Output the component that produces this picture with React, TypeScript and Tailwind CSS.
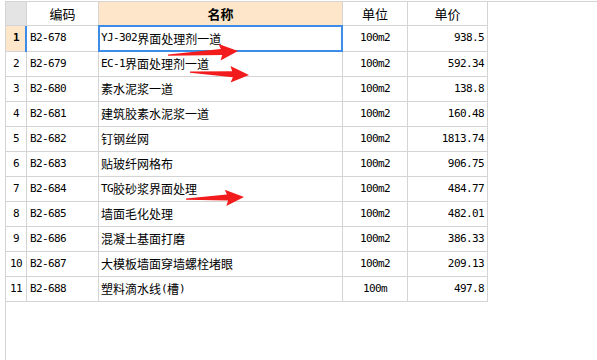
import React from "react"

const rows = [
  ["B2-678", "YJ-302界面处理剂一道", "100m2", "938.5"],
  ["B2-679", "EC-1界面处理剂一道", "100m2", "592.34"],
  ["B2-680", "素水泥浆一道", "100m2", "138.8"],
  ["B2-681", "建筑胶素水泥浆一道", "100m2", "160.48"],
  ["B2-682", "钉钢丝网", "100m2", "1813.74"],
  ["B2-683", "贴玻纤网格布", "100m2", "906.75"],
  ["B2-684", "TG胶砂浆界面处理", "100m2", "484.77"],
  ["B2-685", "墙面毛化处理", "100m2", "482.01"],
  ["B2-686", "混凝土基面打磨", "100m2", "386.33"],
  ["B2-687", "大模板墙面穿墙螺栓堵眼", "100m2", "209.13"],
  ["B2-688", "塑料滴水线(槽)", "100m", "497.8"],
]

const mono = "font-['DejaVu_Sans_Mono',monospace] text-[11px] tracking-[-0.6px]"
const cjk = "font-['Noto_Sans_CJK_SC','Noto_Sans',sans-serif] text-[12px]"

// ascii runs go half width, the rest full width, like the old SimSun grid
function Mixed({ text }: { text: string }) {
  const parts = text.match(/[\x00-\x7f]+|[^\x00-\x7f]+/g) ?? []
  return (
    <>
      {parts.map((p, i) => (
        <span key={i} className={/^[\x00-\x7f]/.test(p) ? mono : cjk}>
          {p}
        </span>
      ))}
    </>
  )
}

// red hand-drawn arrow, tail -> tip
function Arrow({ x1, y1, x2, y2 }: { x1: number; y1: number; x2: number; y2: number }) {
  const L = Math.hypot(x2 - x1, y2 - y1)
  const a = (Math.atan2(y2 - y1, x2 - x1) * 180) / Math.PI
  const pts = [
    [0, -0.6],
    [L - 17, -3],
    [L - 19, -8],
    [L, 0],
    [L - 18, 8.5],
    [L - 16, 3],
    [0, 0.8],
  ]
    .map(p => p.join(","))
    .join(" ")
  return <polygon points={pts} fill="#f21c1c" transform={`translate(${x1} ${y1}) rotate(${a})`} />
}

export default function App() {
  return (
    <div className="relative w-[597px] h-[360px] bg-white pt-px overflow-hidden">
      <div className="ml-[5px] h-[359px] border-l border-t border-[#d4d4d4]">
        <div className="flex h-6 border-b border-[#d4d4d4] w-[482px]">
          <div className="w-[21px] shrink-0 border-r border-[#d4d4d4] bg-[#e4e4e4]" />
          <div className={`w-[72px] shrink-0 border-r border-[#d4d4d4] flex items-center justify-center ${cjk} text-[13px] text-black`}>编码</div>
          <div className={`w-[244px] shrink-0 border-r border-[#d4d4d4] bg-[#fde6c9] flex items-center justify-center ${cjk} text-[13px] font-bold text-black`}>名称</div>
          <div className={`w-[65px] shrink-0 border-r border-[#d4d4d4] flex items-center justify-center ${cjk} text-[13px] text-black`}>单位</div>
          <div className={`w-[80px] shrink-0 border-r border-[#d4d4d4] flex items-center justify-center ${cjk} text-[13px] text-black`}>单价</div>
        </div>
        {rows.map(([code, name, unit, price], i) => {
          const sel = i === 0
          return (
            <div key={code} className={`flex w-[482px] border-b border-[#d4d4d4] text-black ${sel ? "h-[26px]" : "h-[25px]"}`}>
              <div
                className={`relative w-[21px] shrink-0 border-r border-[#d4d4d4] flex items-center justify-center ${mono} ${sel ? "bg-[#fde6c9] font-bold" : ""}`}
              >
                {i + 1}
                {sel && <div className="absolute right-[-1px] top-0 bottom-[-1px] w-[2px] bg-[#3d8ce8]" />}
              </div>
              <div className={`w-[72px] shrink-0 border-r border-[#d4d4d4] flex items-center pl-[3px] ${mono}`}>{code}</div>
              <div className="relative w-[244px] shrink-0 border-r border-[#d4d4d4] flex items-center pl-[2px] whitespace-nowrap">
                <Mixed text={name} />
                {sel && <div className="absolute left-[-1px] top-[-1px] right-[-1px] bottom-[-1px] border-2 border-[#3d8ce8]" />}
              </div>
              <div className={`w-[65px] shrink-0 border-r border-[#d4d4d4] flex items-center justify-center ${mono}`}>{unit}</div>
              <div className={`w-[80px] shrink-0 border-r border-[#d4d4d4] flex items-center justify-end pr-[3px] ${mono}`}>{price}</div>
            </div>
          )
        })}
      </div>
      <svg className="absolute left-0 top-0 pointer-events-none" width="597" height="360">
        <Arrow x1={168} y1={55} x2={238} y2={51} />
        <Arrow x1={190} y1={72} x2={249} y2={75} />
        <Arrow x1={186} y1={199} x2={244} y2={197} />
      </svg>
    </div>
  )
}
